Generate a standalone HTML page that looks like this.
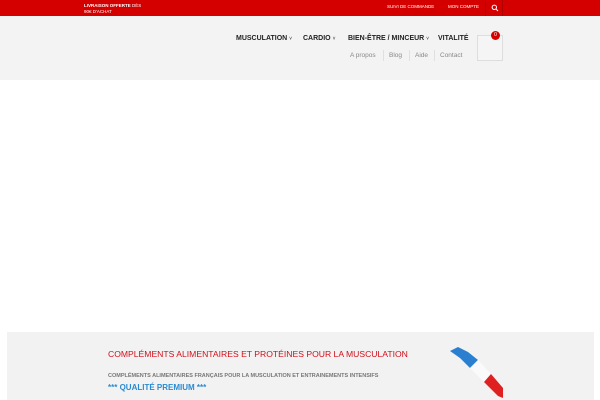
<!DOCTYPE html>
<html><head><meta charset="utf-8"><style>
*{margin:0;padding:0;box-sizing:border-box}
body{width:600px;height:400px;overflow:hidden;background:#fff;font-family:"Liberation Sans",sans-serif;position:relative}
.top{position:absolute;left:0;top:0;width:600px;height:16px;background:#d40000}
.t{position:absolute;color:#fff;font-size:4.5px;line-height:5px}
.hdr{position:absolute;left:0;top:16px;width:600px;height:64px;background:#f3f3f3}
.nav{position:absolute;top:35px;font-size:7px;font-weight:bold;color:#222}
.sub{position:absolute;top:52px;font-size:6.5px;color:#888}
.sep{position:absolute;top:50px;width:1px;height:11px;background:#e0e0e0}
.band{position:absolute;left:7px;top:332px;width:587px;height:68px;background:#f2f2f2}
</style></head><body>
<div class="top"></div>
<div class="t" style="left:84px;top:3px;font-weight:bold">LIVRAISON OFFERTE <span style="font-weight:normal">DÈS</span></div>
<div class="t" style="left:84px;top:9px">90€ D'ACHAT</div>
<div class="t" style="left:387px;top:4px">SUIVI DE COMMANDE</div>
<div class="t" style="left:448px;top:4px">MON COMPTE</div>
<div style="position:absolute;left:485px;top:0;width:1px;height:16px;background:#b00000"></div>
<div style="position:absolute;left:502px;top:0;width:1px;height:16px;background:#b00000"></div>
<svg style="position:absolute;left:491px;top:4px" width="8" height="8"><circle cx="3.3" cy="3.3" r="2.2" fill="none" stroke="#fff" stroke-width="1"/><line x1="5" y1="5" x2="7" y2="7" stroke="#fff" stroke-width="1"/></svg>
<div class="hdr"></div>
<div class="nav" style="left:236px">MUSCULATION <span style="font-weight:normal;font-size:5px">˅</span></div>
<div class="nav" style="left:303px">CARDIO <span style="font-weight:normal;font-size:5px">˅</span></div>
<div class="nav" style="left:348px">BIEN-ÊTRE / MINCEUR <span style="font-weight:normal;font-size:5px">˅</span></div>
<div class="nav" style="left:438px">VITALITÉ</div>
<div class="sub" style="left:350px">A propos</div>
<div class="sep" style="left:383px"></div>
<div class="sub" style="left:389px">Blog</div>
<div class="sep" style="left:409px"></div>
<div class="sub" style="left:415px">Aide</div>
<div class="sep" style="left:434px"></div>
<div class="sub" style="left:440px">Contact</div>
<div style="position:absolute;left:477px;top:35px;width:26px;height:26px;border:1px solid #ddd;background:#f5f5f5"></div>
<div style="position:absolute;left:491px;top:31px;width:9px;height:9px;border-radius:50%;background:#d40000;color:#fff;font-size:5px;text-align:center;line-height:9px">0</div>
<div class="band"></div>
<div style="position:absolute;left:108px;top:349px;font-size:8.6px;color:#d0101b">COMPLÉMENTS ALIMENTAIRES ET PROTÉINES POUR LA MUSCULATION</div>
<div style="position:absolute;left:108px;top:373px;font-size:5.5px;font-weight:bold;color:#777">COMPLÉMENTS ALIMENTAIRES FRANÇAIS POUR LA MUSCULATION ET ENTRAINEMENTS INTENSIFS</div>
<div style="position:absolute;left:108px;top:383px;font-size:8px;font-weight:bold;color:#2a8ad0">*** QUALITÉ PREMIUM ***</div>
<svg style="position:absolute;left:448px;top:346px" width="56" height="54">
<polygon points="2,5 10,1 20,6 30,14 22,22 12,12" fill="#2a7fd0"/>
<polygon points="30,14 22,22 36,36 43,28" fill="#fafafa"/>
<polygon points="43,28 36,36 50,50 55,52 55,42" fill="#e02020"/>
</svg>
</body></html>
